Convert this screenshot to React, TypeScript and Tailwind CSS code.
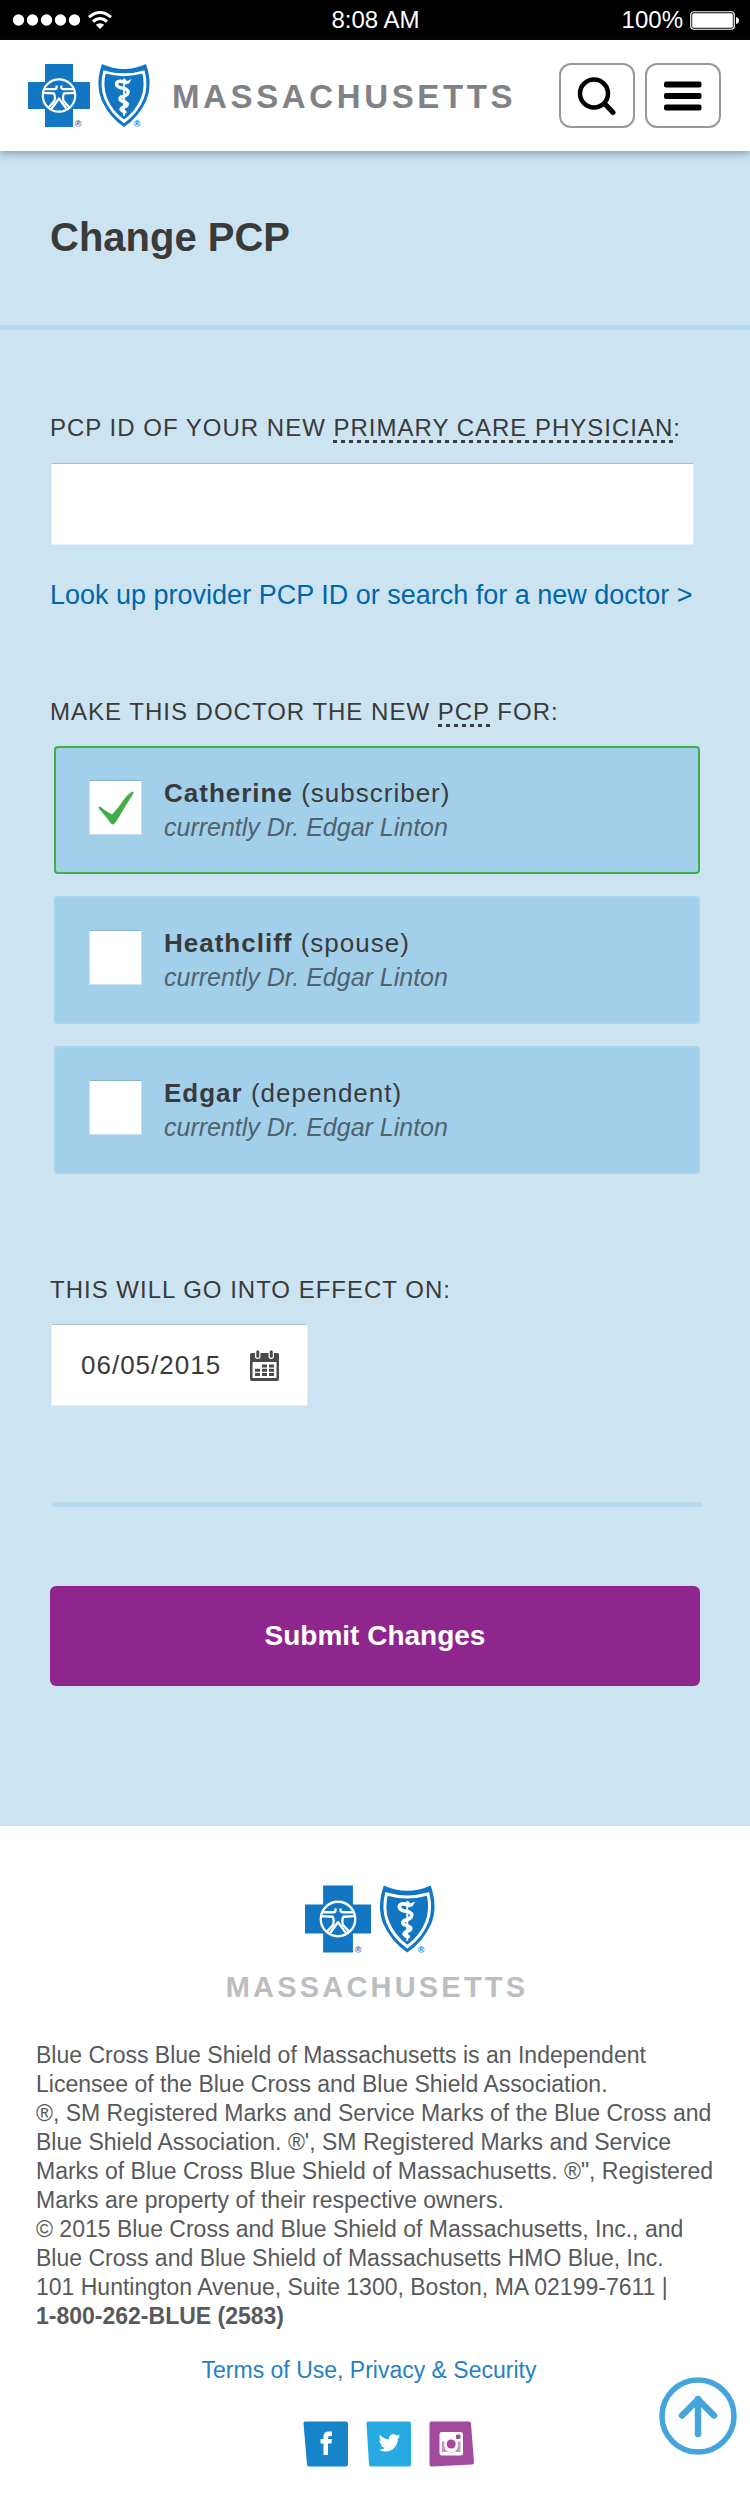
import React, { useState } from "react";

function BlueLogo({ className }: { className: string }) {
  return (
    <svg viewBox="0 0 123 63" className={className} role="img" aria-label="Blue Cross Blue Shield">
      <path d="M17 0H45V18H62V45H45V63H17V45H0V18H17Z" fill="#1376c3" />
      <circle cx="31" cy="31.500" r="16.200" fill="#1376c3" stroke="#fff" strokeWidth="2.200" />
      <g fill="none" stroke="#fff" strokeWidth="2.200" strokeLinejoin="round">
        <path d="M16 25.200H27Q29.200 24.800 28.600 21.500" />
        <path d="M46 25.200H35Q32.800 24.800 33.400 21.500" />
        <path d="M15 28.800L26 29.400Q28 34 26 37.500L20.500 43.500" />
        <path d="M47 28.800L36 29.400Q34 34 36 37.500L41.500 43.500" />
        <path d="M23 45.500L31 34.500L39 45.500" />
      </g>
      <circle cx="31" cy="19.200" r="2.500" fill="#1376c3" />
      <path d="M74 0Q96 10 118 0Q125 20 118.500 36Q111 53 96 63Q81 53 73.500 36Q67 20 74 0Z" fill="#1376c3" />
      <path
        d="M76.500 8Q96 13.500 115.500 8Q119 22 114.500 34Q109 48 96 57.500Q83 48 77.500 34Q73 22 76.500 8Z"
        fill="none"
        stroke="#fff"
        strokeWidth="2.800"
      />
      <path
        d="M97.500 18.500Q89 15.500 88.500 20Q88.500 23.500 96 24.500Q102 26 99.500 30Q97 32.500 93 33Q90 36 95 37.500Q101 39 98.500 42Q94 43 93 45.500Q94 47.500 97 48"
        fill="none"
        stroke="#fff"
        strokeWidth="3.400"
        strokeLinecap="round"
        strokeLinejoin="round"
      />
      <path d="M96 14L99 17L103.500 15L101 19.500L97 20.500Z" fill="#fff" />
      <path d="M96 15V52" stroke="#fff" strokeWidth="1.800" />
    </svg>
  );
}

function Logo({ large }: { large?: boolean }) {
  return (
    <div className={large ? "relative mr-[9px] h-[68px] w-[131px]" : "relative h-[63px] w-[123px]"}>
      <BlueLogo className="block h-full w-full" />
      <span className="absolute -bottom-0.5 left-[38%] text-[9px] leading-[10px] font-bold text-[#1376c3]">®</span>
      <span className="absolute -bottom-0.5 left-[86%] text-[9px] leading-[10px] font-bold text-[#1376c3]">®</span>
    </div>
  );
}

function StatusBar() {
  return (
    <div className="grid h-10 grid-cols-3 items-center bg-black pr-[11px] pl-3 text-[24px] leading-10 text-white">
      <div className="flex items-center gap-2">
        <svg viewBox="0 0 68 12" className="h-3 w-[68px]" fill="#fff" aria-hidden="true">
          <circle cx="6.500" cy="6" r="5.700" />
          <circle cx="20.500" cy="6" r="5.700" />
          <circle cx="34.500" cy="6" r="5.700" />
          <circle cx="48.500" cy="6" r="5.700" />
          <circle cx="62.500" cy="6" r="5.700" />
        </svg>
        <svg viewBox="0 0 24 18" className="h-[18px] w-6" fill="none" stroke="#fff" strokeWidth="3" aria-hidden="true">
          <path d="M1 6.200Q12 -3.200 23 6.200" />
          <path d="M5 10.500Q12 4.500 19 10.500" />
          <path d="M12 18L7.800 13.800Q12 10.600 16.200 13.800Z" fill="#fff" stroke="none" />
        </svg>
      </div>
      <div className="text-center">8:08 AM</div>
      <div className="flex items-center justify-end gap-[7px]">
        <span>100%</span>
        <svg viewBox="0 0 49 19" className="h-[19px] w-[49px]" aria-hidden="true">
          <rect x="0.750" y="0.750" width="43.500" height="17.500" rx="3" fill="none" stroke="#fff" strokeWidth="1.200" />
          <rect x="2.200" y="2.200" width="40.600" height="14.600" rx="1.500" fill="#fff" />
          <path d="M46 6Q49 7 49 9.500Q49 12 46 13Z" fill="#fff" />
        </svg>
      </div>
    </div>
  );
}

function Header() {
  return (
    <header className="relative z-10 flex h-[111px] items-center bg-white pr-[29px] pl-7 shadow-[0_3px_8px_rgba(50,80,105,0.45)]">
      <Logo />
      <span className="ml-[21px] pt-0.5 text-[33px] leading-[36px] font-bold tracking-[0.11em] text-[#808285]">
        MASSACHUSETTS
      </span>
      <div className="ml-auto flex gap-2.5">
        <button
          type="button"
          aria-label="Search"
          className="flex h-[65px] w-[76px] items-center justify-center rounded-xl border-2 border-[#999]"
        >
          <svg viewBox="0 0 40 40" className="h-10 w-10" fill="none" stroke="#000" strokeLinecap="round" aria-hidden="true">
            <circle cx="17" cy="17.500" r="14" strokeWidth="4.500" />
            <path d="M28 28L36 36.500" strokeWidth="5" />
          </svg>
        </button>
        <button
          type="button"
          aria-label="Menu"
          className="flex h-[65px] w-[76px] items-center justify-center rounded-xl border-2 border-[#999]"
        >
          <svg viewBox="0 0 38 30" className="h-[30px] w-[38px]" aria-hidden="true">
            <rect width="37.500" height="6" y="0.500" rx="2" />
            <rect width="37.500" height="6" y="12" rx="2" />
            <rect width="37.500" height="6" y="23.500" rx="2" />
          </svg>
        </button>
      </div>
    </header>
  );
}

const dotted =
  "bg-[repeating-linear-gradient(90deg,#3a3a3a_0_4px,transparent_4px_8px)] bg-[length:100%_3px] bg-bottom bg-no-repeat pb-0.5";
const fieldLabel = "text-[24px] leading-[30px] tracking-[1px]";

const members = [
  { name: "Catherine", relation: "subscriber" },
  { name: "Heathcliff", relation: "spouse" },
  { name: "Edgar", relation: "dependent" },
];

function MemberCard({
  name,
  relation,
  checked,
  onChange,
}: {
  name: string;
  relation: string;
  checked: boolean;
  onChange: () => void;
}) {
  return (
    <label
      className={
        "flex h-32 items-start gap-[22px] rounded-[4px] border-2 bg-[#a2d0ea] pt-8 pl-[33px] " +
        (checked ? "border-[#3fae49]" : "border-[#a7d3ec]")
      }
    >
      <span className="grid">
        <input
          type="checkbox"
          checked={checked}
          onChange={onChange}
          className="col-start-1 row-start-1 h-[55px] w-[53px] appearance-none border border-[#c5e1f1] border-t-[#86b5d2] bg-white"
        />
        {checked && (
          <svg
            viewBox="0 0 36 34"
            className="pointer-events-none col-start-1 row-start-1 h-[34px] w-9 place-self-center"
            fill="#3fae49"
            aria-hidden="true"
          >
            <path d="M1 15.500Q3 15.500 6.500 19Q11 22 14 23.500Q17 20.500 22 14Q30 2 34.500 0.500Q36.500 0.500 34.500 4Q28 14 23 22.500Q18.500 31 15.500 33.500Q14 34 12.500 32Q6 23 1.500 18.500Q0 16.500 1 15.500Z" />
          </svg>
        )}
      </span>
      <span className="-mt-1 block">
        <span className="block text-[26px] leading-[34px] tracking-[1px]">
          <strong>{name}</strong> ({relation})
        </span>
        <span className="block text-[25px] leading-[34px] text-[#50626e] italic">currently Dr. Edgar Linton</span>
      </span>
    </label>
  );
}

function CalendarIcon() {
  return (
    <svg viewBox="0 0 29 31" className="h-[31px] w-[29px]" fill="#4a4a4a" aria-hidden="true">
      <path
        fillRule="evenodd"
        d="M1.500 3H27.500Q29 3 29 4.500V29Q29 31 27 31H2Q0 31 0 29V4.500Q0 3 1.500 3ZM2.500 12V28H26.500V12Z"
      />
      <rect x="5" y="-1" width="5.500" height="10" rx="2.700" fill="#fff" />
      <rect x="18.500" y="-1" width="5.500" height="10" rx="2.700" fill="#fff" />
      <rect x="6.300" y="0.200" width="3" height="7.500" rx="1.500" />
      <rect x="19.800" y="0.200" width="3" height="7.500" rx="1.500" />
      <path d="M12 14.500h5v3h-5zM19 14.500h5v3h-5zM5 18.800h5v3h-5zM12 18.800h5v3h-5zM19 18.800h5v3h-5zM5 23h5v3h-5zM12 23h5v3h-5zM19 23h5v3h-5z" />
    </svg>
  );
}

function ChangeForm() {
  const [pcpId, setPcpId] = useState("");
  const [date, setDate] = useState("06/05/2015");
  const [selected, setSelected] = useState<string[]>(["Catherine"]);
  const toggle = (name: string) =>
    setSelected((prev) => (prev.includes(name) ? prev.filter((n) => n !== name) : [...prev, name]));

  return (
    <main className="bg-[#cce4f2] text-[#3a3a3a]">
      <div className="border-b-[5px] border-[#b7daee] px-[50px] pt-[62px] pb-[63px]">
        <h1 className="text-[40px] leading-[49px] font-bold">Change PCP</h1>
      </div>
      <form className="flex flex-col px-[50px] pt-[83px] pb-[140px]" onSubmit={(e) => e.preventDefault()}>
        <label htmlFor="pcp-id" className={fieldLabel}>
          PCP ID OF YOUR NEW <abbr className={dotted}>PRIMARY CARE PHYSICIAN</abbr>:
        </label>
        <input
          id="pcp-id"
          type="text"
          value={pcpId}
          onChange={(e) => setPcpId(e.target.value)}
          className="mt-5 mr-1.5 ml-px h-[82px] border border-[#e3f0f8] border-t-[#a9bfcc] bg-white px-7 text-[26px] tracking-[1px]"
        />
        <a href="#lookup" className="mt-[34px] text-[27px] leading-[32px] text-[#0067a8]">
          Look up provider PCP ID or search for a new doctor &gt;
        </a>
        <fieldset className="mt-[86px]">
          <legend className={fieldLabel}>
            MAKE THIS DOCTOR THE NEW <abbr className={dotted}>PCP</abbr> FOR:
          </legend>
          <div className="mt-[19px] ml-1 flex flex-col gap-[22px]">
            {members.map((m) => (
              <MemberCard key={m.name} {...m} checked={selected.includes(m.name)} onChange={() => toggle(m.name)} />
            ))}
          </div>
        </fieldset>
        <label htmlFor="effective" className={"mt-[101px] " + fieldLabel}>
          THIS WILL GO INTO EFFECT ON:
        </label>
        <div className="mt-[19px] ml-px flex h-[82px] w-[257px] items-center justify-between border border-[#e3f0f8] border-t-[#a9bfcc] bg-white pr-7 pl-[29px]">
          <input
            id="effective"
            type="text"
            value={date}
            onChange={(e) => setDate(e.target.value)}
            className="w-[150px] bg-transparent text-[26px] leading-[32px] tracking-[1px] outline-none"
          />
          <button type="button" aria-label="Choose date">
            <CalendarIcon />
          </button>
        </div>
        <hr className="mt-[96px] -mr-0.5 ml-0.5 h-[5px] border-0 bg-[#b7daee]" />
        <button
          type="submit"
          className="mt-[79px] h-[100px] rounded-md bg-[#8f268d] text-[28px] leading-[34px] font-bold text-white"
        >
          Submit Changes
        </button>
      </form>
    </main>
  );
}

function Footer() {
  return (
    <footer className="relative bg-white pt-[59px] pb-10 text-[23px] leading-[29px] text-[#58595b]">
      <div className="flex flex-col items-center">
        <Logo large />
        <div className="mt-[17px] pl-1 text-[29px] leading-[34px] font-bold tracking-[0.11em] text-[#bbbdc0]">
          MASSACHUSETTS
        </div>
      </div>
      <p className="mt-[37px] pr-7 pl-9">
        Blue Cross Blue Shield of Massachusetts is an Independent
        <br />
        Licensee of the Blue Cross and Blue Shield Association.
        <br />
        ®, SM Registered Marks and Service Marks of the Blue Cross and
        <br />
        Blue Shield Association. ®', SM Registered Marks and Service
        <br />
        Marks of Blue Cross Blue Shield of Massachusetts. ®", Registered
        <br />
        Marks are property of their respective owners.
        <br />
        © 2015 Blue Cross and Blue Shield of Massachusetts, Inc., and
        <br />
        Blue Cross and Blue Shield of Massachusetts HMO Blue, Inc.
        <br />
        101 Huntington Avenue, Suite 1300, Boston, MA 02199-7611 |
        <br />
        <strong>1-800-262-BLUE (2583)</strong>
      </p>
      <div className="mt-[25px] pr-3 text-center">
        <a href="#terms" className="text-[#2581c1]">
          Terms of Use, Privacy &amp; Security
        </a>
      </div>
      <div className="mt-9 flex justify-center gap-[18px] pl-[26px]">
        <a href="#facebook" aria-label="Facebook">
          <svg viewBox="0 0 45 46" className="h-[46px] w-[45px]" aria-hidden="true">
            <path d="M2 0.500H43Q45 0.500 45 2.500V43.500Q45 45.500 43 45.500H6Q4 45.500 4 43.500L0.500 2.500Q0.500 0.500 2 0.500Z" fill="#1584c8" />
            <path d="M20.500 34V22.500H17.500V18H20.500V15.500Q20.500 10.500 25.500 10.500H29V15H27Q25 15 25 17V18H29L28.500 22.500H25V34Z" fill="#fff" />
          </svg>
        </a>
        <a href="#twitter" aria-label="Twitter">
          <svg viewBox="0 0 45 46" className="h-[46px] w-[45px]" aria-hidden="true">
            <path d="M2 0.500H43Q45 0.500 45 2.500V43.500Q45 45.500 43 45.500H5Q3 45.500 3 43.500L0.500 2.500Q0.500 0.500 2 0.500Z" fill="#27aae1" />
            <path
              transform="translate(12.500 11) scale(0.9)"
              d="M23.950 4.570a10 10 0 0 1-2.820.77 4.960 4.960 0 0 0 2.160-2.720c-.95.550-2 .96-3.130 1.180a4.920 4.920 0 0 0-8.380 4.480C7.690 8.100 4.070 6.130 1.640 3.160a4.820 4.820 0 0 0-.67 2.480c0 1.710.87 3.210 2.190 4.100a4.900 4.900 0 0 1-2.230-.62v.06a4.920 4.920 0 0 0 3.950 4.830 5 5 0 0 1-2.210.08 4.940 4.940 0 0 0 4.600 3.420A9.870 9.870 0 0 1 0 19.540a13.990 13.990 0 0 0 7.550 2.210c9.050 0 14-7.500 14-13.980 0-.21 0-.42-.02-.63A9.940 9.940 0 0 0 24 4.590z"
              fill="#fff"
            />
          </svg>
        </a>
        <a href="#instagram" aria-label="Instagram">
          <svg viewBox="0 0 45 46" className="h-[46px] w-[45px]" aria-hidden="true">
            <path d="M2.500 0.500H40Q42 0.500 42 2.500L45 41.500Q45 43.500 43 43.500L2.500 45.500Q0.500 45.500 0.500 43.500V2.500Q0.500 0.500 2.500 0.500Z" fill="#a44a9c" />
            <rect x="10.500" y="11" width="23.500" height="23.500" rx="2.500" fill="#fff" />
            <path d="M13 20.500H17A6.800 6.800 0 1 0 27.500 20.500H31.500V31H13Z" fill="#c98fc5" />
            <circle cx="22.200" cy="23" r="7" fill="#fff" />
            <circle cx="22.200" cy="23" r="4.500" fill="#a44a9c" />
            <rect x="27" y="13.500" width="4.500" height="4.500" rx="1" fill="#a44a9c" />
          </svg>
        </a>
      </div>
      <a href="#top" aria-label="Back to top" className="absolute right-[13px] bottom-[52px]">
        <svg viewBox="0 0 78 78" className="h-[78px] w-[78px]" fill="none" stroke="#43a5dc" strokeLinecap="round" strokeLinejoin="round" aria-hidden="true">
          <circle cx="39" cy="39" r="36" strokeWidth="5.500" />
          <path d="M39 57V22M23 38.500L39 22.500L55 38.500" strokeWidth="6.500" />
        </svg>
      </a>
    </footer>
  );
}

export default function App() {
  return (
    <div id="top" className="bg-white font-['Liberation_Sans',Arial,sans-serif]">
      <StatusBar />
      <Header />
      <ChangeForm />
      <Footer />
    </div>
  );
}
